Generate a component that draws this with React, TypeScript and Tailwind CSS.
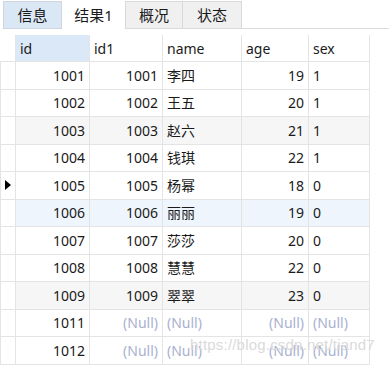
import React from 'react';

const rows: [string, string, string, string, string][] = [
  ['1001', '1001', '李四', '19', '1'],
  ['1002', '1002', '王五', '20', '1'],
  ['1003', '1003', '赵六', '21', '1'],
  ['1004', '1004', '钱琪', '22', '1'],
  ['1005', '1005', '杨幂', '18', '0'],
  ['1006', '1006', '丽丽', '19', '0'],
  ['1007', '1007', '莎莎', '20', '0'],
  ['1008', '1008', '慧慧', '22', '0'],
  ['1009', '1009', '翠翠', '23', '0'],
  ['1011', '', '', '', ''],
  ['1012', '', '', '', ''],
];

const rowBg = (i: number) => {
  if (i === 5) return 'bg-[#eef5fc]';
  if (i === 2 || i === 8) return 'bg-[#f6f6f6]';
  return 'bg-white';
};

const Null = () => <span className="text-[#a9b1cf]">(Null)</span>;

const Cell = ({ w, right, children }: { w: string; right?: boolean; children?: React.ReactNode }) => (
  <div
    className={`${w} h-full shrink-0 border-r border-[#e4e4e4] flex items-center px-[4px] ${
      right ? 'justify-end' : 'justify-start'
    }`}
  >
    {children}
  </div>
);

export default function App() {
  return (
    <div
      className="relative w-[389px] h-[380px] bg-white overflow-hidden text-[14px] text-[#1a1a1a]"
      style={{ fontFamily: '"Noto Sans", "Noto Sans CJK SC", sans-serif' }}
    >
      {/* tabs */}
      <div className="flex h-[29px] pt-[1px] pl-[3px] text-[15px]">
        <div className="w-[59px] h-full flex items-center justify-center bg-[#dae7f5] border border-[#cfd6de]">
          信息
        </div>
        <div className="w-[63px] h-full flex items-center justify-center bg-white">结果1</div>
        <div className="w-[58px] h-full flex items-center justify-center bg-[#f0f0f0] border border-[#d9d9d9]">
          概况
        </div>
        <div className="w-[59px] h-full flex items-center justify-center bg-[#f0f0f0] border border-l-0 border-[#d9d9d9]">
          状态
        </div>
        <div className="flex-1 h-full border-b border-[#dcdcdc]" />
      </div>

      {/* grid */}
      <div className="mt-[6px] w-[370px]">
        <div className="flex h-[27px] border-b border-[#e4e4e4]">
          <div className="w-[16px] shrink-0 border-r border-[#e4e4e4]" />
          <div className="w-[74px] h-full shrink-0 border-r border-[#e4e4e4] bg-[#dae8f7] flex items-center px-[4px]">
            id
          </div>
          <Cell w="w-[73px]">id1</Cell>
          <Cell w="w-[79px]">name</Cell>
          <Cell w="w-[67px]">age</Cell>
          <Cell w="w-[61px]">sex</Cell>
        </div>
        {rows.map((r, i) => (
          <div key={r[0]} className={`flex h-[27.5px] border-b border-[#e4e4e4] ${rowBg(i)}`}>
            <div className="w-[16px] h-full shrink-0 border-l border-r border-[#e4e4e4] bg-white flex items-center pl-[4px]">
              {i === 4 && (
                <div className="w-0 h-0 border-y-[5px] border-y-transparent border-l-[6px] border-l-black" />
              )}
            </div>
            <Cell w="w-[74px]" right>
              {r[0]}
            </Cell>
            <Cell w="w-[73px]" right>
              {r[1] || <Null />}
            </Cell>
            <Cell w="w-[79px]">{r[2] || <Null />}</Cell>
            <Cell w="w-[67px]" right>
              {r[3] || <Null />}
            </Cell>
            <Cell w="w-[61px]">{r[4] || <Null />}</Cell>
          </div>
        ))}
      </div>

      {/* watermark */}
      <div
        className="absolute left-[190px] top-[334px] text-[15px] text-[#dadada] tracking-[0.2px]"
        style={{ fontFamily: '"Liberation Sans", Arial, sans-serif' }}
      >
        https://blog.csdn.net/tiand7
      </div>
    </div>
  );
}
